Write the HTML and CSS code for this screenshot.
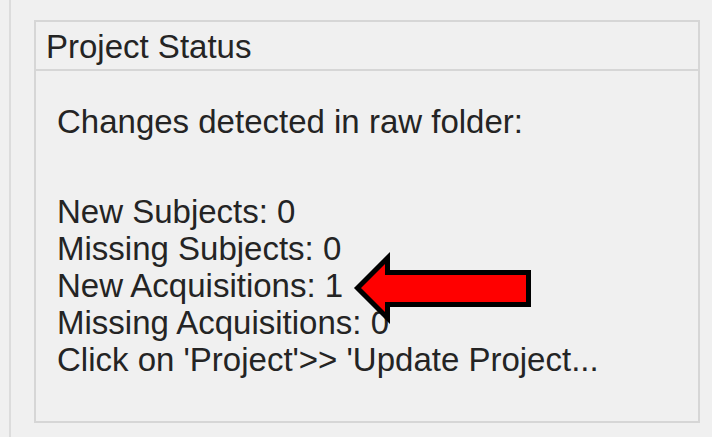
FILE: index.html
```html
<!DOCTYPE html>
<html>
<head>
<meta charset="utf-8">
<link rel="stylesheet" href="styles.css">
</head>
<body>
<div class="page">
  <div class="rail">
    <section class="panel">
      <div class="panel-header">Project Status</div>
      <div class="panel-body">
        <p class="intro">Changes detected in raw folder:</p>
        <ul class="stats">
          <li>New Subjects: 0</li>
          <li>Missing Subjects: 0</li>
          <li>New Acquisitions: 1</li>
          <li>Missing Acquisitions: 0</li>
          <li>Click on 'Project'&gt;&gt; 'Update Project...</li>
        </ul>
      </div>
    </section>
  </div>
  <svg class="arrow" width="200" height="100" viewBox="0 0 200 100">
    <polygon points="17.5,48 47.5,18 47.5,32.5 188.5,32.5 188.5,64.5 47.5,64.5 47.5,78" fill="#ff0000" stroke="#000" stroke-width="5" stroke-linejoin="miter" stroke-miterlimit="10"/>
  </svg>
</div>
</body>
</html>
```

FILE: styles.css
```css
html, body {
  margin: 0;
  padding: 0;
  background: #f0f0f0;
}

.page {
  position: relative;
  width: 712px;
  height: 437px;
  padding-left: 9px;
  box-sizing: border-box;
  overflow: hidden;
  font-family: "Liberation Sans", Arial, sans-serif;
  font-size: 33px;
  line-height: 37px;
  color: #242424;
}

.rail {
  height: 100%;
  border-left: 2px solid #dcdcdc;
  padding: 20px 0 0 23px;
  box-sizing: border-box;
}

.panel {
  width: 666px;
  height: 403px;
  border: 2px solid #d6d6d6;
  box-sizing: border-box;
  display: flex;
  flex-direction: column;
}

.panel-header {
  height: 49px;
  padding: 6px 0 0 10px;
  box-sizing: border-box;
  border-bottom: 2px solid #d6d6d6;
}

.panel-body {
  padding: 32px 0 0 21px;
}

.intro {
  margin: 0 0 53px 0;
}

.stats {
  list-style: none;
  margin: 0;
  padding: 0;
}

.arrow {
  position: absolute;
  left: 340px;
  top: 240px;
}
```
